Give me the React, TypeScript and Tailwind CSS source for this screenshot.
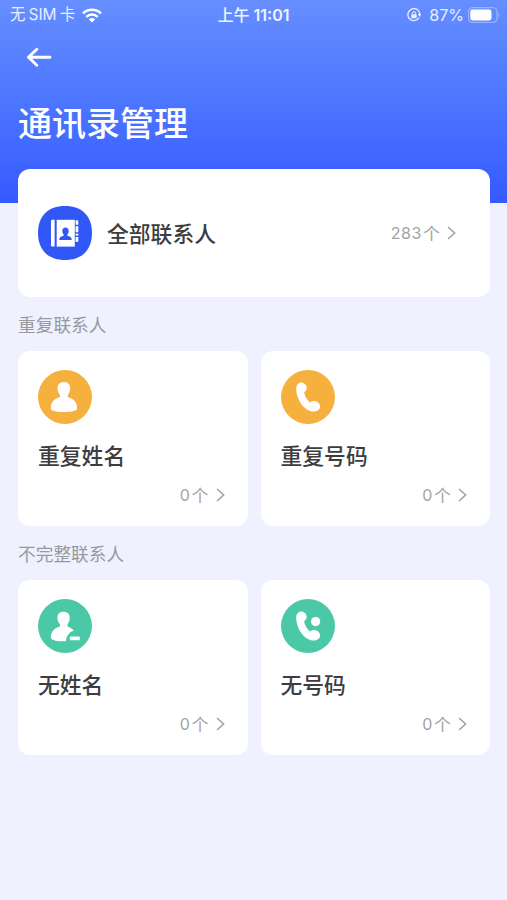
import React from 'react';

interface Tile {
  title: string;
  count: number;
  icon: React.ReactNode;
}

interface SectionProps {
  label: string;
  tiles: Tile[];
}

const PHONE_PATH =
  'M18.2 13.1C20.8 11.8 24.2 13.2 25.3 16C26.3 18.6 25.5 20.7 23.2 22C23.4 25.7 25.9 30 29.2 32.4C31.3 30.8 34.4 30.6 36.7 32.2C39.4 34.1 39.9 37.7 37.7 39.8C34.6 42.6 29.3 42.1 24.9 38.8C19.2 34.5 15.5 26.6 15.2 19.8C15 16.5 16 14.3 18.2 13.1Z';

function ContactBookIcon() {
  return (
    <svg viewBox="0 0 54 54" className="size-[54px] shrink-0">
      <path
        d="M27 0C44 0 54 10 54 27S44 54 27 54S0 44 0 27S10 0 27 0Z"
        fill="#3157f7"
      />
      <g fill="#fff">
        <path d="M14.5 13.8H16.6V40.6H14.5C13.5 40.6 13 40.1 13 39.2V15.2C13 14.3 13.5 13.8 14.5 13.8Z" />
        <path d="M18.7 13.8H36.8V40.6H18.7Z" />
        <path d="M37.6 14.2H39Q40.3 14.2 40.3 15.5V18.8H37.6Z" />
        <path d="M37.6 20.2H40.3V26.2H37.6Z" />
        <path d="M37.6 27.6H40.3V29.6H37.6Z" />
        <path d="M37.6 31H40.3V34.6Q40.3 35.9 39 35.9H37.6Z" />
      </g>
      <path
        d="M27.5 21.4C29.5 21.4 30.7 22.7 30.7 24.7C30.7 26.5 30.1 27.7 29.3 28.6V29.8C31.9 30.3 33.8 31.2 33.8 33.9H21.2C21.2 31.2 23.1 30.3 25.7 29.8V28.6C24.9 27.7 24.3 26.5 24.3 24.7C24.3 22.7 25.5 21.4 27.5 21.4Z"
        fill="#3157f7"
      />
    </svg>
  );
}

function PersonIcon() {
  return (
    <svg viewBox="0 0 54 54" className="size-[54px]">
      <circle cx="27" cy="27" r="27" fill="#f6b03d" />
      <path
        d="M25.8 12C29.8 12 32.2 14.5 32.2 18.2C32.2 21.3 31 23.3 29.8 24.9V27C35.2 28.5 39.1 32.1 39.1 38.2C39.1 40.8 34.5 42 25.9 42C17.4 42 12.8 40.8 12.8 38.2C12.8 32.1 16.8 28.5 22 27V24.9C20.7 23.3 19.5 21.3 19.5 18.2C19.5 14.5 21.9 12 25.8 12Z"
        fill="#fff"
      />
    </svg>
  );
}

function PhoneIcon() {
  return (
    <svg viewBox="0 0 54 54" className="size-[54px]">
      <circle cx="27" cy="27" r="27" fill="#f6b03d" />
      <path d={PHONE_PATH} fill="#fff" />
    </svg>
  );
}

function PersonMissingIcon() {
  return (
    <svg viewBox="0 0 54 54" className="size-[54px]">
      <circle cx="27" cy="27" r="27" fill="#4bc8a5" />
      <path
        d="M25.5 12.8C29.4 12.8 31.7 15.1 31.7 18.7C31.7 21.7 30.6 23.7 29.5 25.2V27.4C32 28.3 34.2 29.7 35.8 31.6C31.2 33.2 28.2 37 28 42.3H24.3C17.4 42.2 12.8 41 12.8 38.3C12.8 32.5 16.5 29 21.9 27.4V25.2C20.6 23.7 19.4 21.7 19.4 18.7C19.4 15.1 21.6 12.8 25.5 12.8Z"
        fill="#fff"
      />
      <rect x="31.8" y="37.6" width="10" height="3.6" rx="0.8" fill="#fff" />
    </svg>
  );
}

function PhoneMissingIcon() {
  return (
    <svg viewBox="0 0 54 54" className="size-[54px]">
      <circle cx="27" cy="27" r="27" fill="#4bc8a5" />
      <path d={PHONE_PATH} fill="#fff" />
      <circle cx="34.6" cy="22.6" r="4.6" fill="#fff" />
    </svg>
  );
}

function Count({ value }: { value: number }) {
  return (
    <div className="flex items-center text-[#a3a3a6]">
      <span className="font-['Inter','Noto_Sans_CJK_SC',sans-serif] text-base leading-6 tracking-[0.6px]">
        {value}
      </span>
      <span className="ml-px text-[17px] leading-6">个</span>
      <svg viewBox="0 0 9 14" className="ml-[7px] h-3.5 w-[9px]" fill="none">
        <path d="M1 1L7.6 7L1 13" stroke="currentColor" strokeWidth="1.6" />
      </svg>
    </div>
  );
}

function Section({ label, tiles }: SectionProps) {
  return (
    <section>
      <h2 className="flex h-[54px] items-center text-[17.7px] text-[#98999f]">
        {label}
      </h2>
      <div className="grid grid-cols-2 gap-[13px]">
        {tiles.map((tile) => (
          <div
            key={tile.title}
            className="flex h-[175px] flex-col rounded-xl bg-white px-5 pt-[19px]"
          >
            {tile.icon}
            <div className="mt-[15px] text-[21.8px] leading-8 font-medium text-[#3d3d3f]">
              {tile.title}
            </div>
            <div className="mt-3 flex justify-end pr-[3px]">
              <Count value={tile.count} />
            </div>
          </div>
        ))}
      </div>
    </section>
  );
}

function StatusBar() {
  return (
    <div className="grid h-[30px] grid-cols-3 items-center font-['Inter','Noto_Sans_CJK_SC',sans-serif] text-base text-white/85">
      <div className="flex items-center pl-2.5">
        <div className="flex gap-[3px] text-[15.5px] whitespace-nowrap">
          <span>无</span>
          <span>SIM</span>
          <span>卡</span>
        </div>
        <svg viewBox="0 0 20 15" className="ml-[7px] h-[15px] w-5" fill="none">
          <g stroke="#fff" strokeWidth="2.5">
            <path d="M1 5.3C6 0.5 14 0.5 19 5.3" />
            <path d="M4.3 8.8C7.6 5.8 12.4 5.8 15.7 8.8" />
          </g>
          <path d="M6.8 11.2C8.7 9.6 11.3 9.6 13.2 11.2L10 14.6Z" fill="#fff" />
        </svg>
      </div>
      <div className="text-center font-semibold whitespace-nowrap text-white/90">
        <span className="font-medium">上午</span> 11:01
      </div>
      <div className="flex items-center justify-end pr-[7px]">
        <svg viewBox="0 0 14 14" className="mr-2 size-3.5" fill="none">
          <path
            d="M12 9.8A6 6 0 1 1 12.9 6.2"
            stroke="currentColor"
            strokeWidth="1.4"
          />
          <path d="M10.8 6H14L12.9 9.2Z" fill="currentColor" />
          <rect x="4.3" y="6.3" width="5.4" height="4" rx="0.6" fill="currentColor" />
          <path d="M5.4 6.5V5.2A1.6 1.6 0 0 1 8.6 5.2V6.5" stroke="currentColor" />
        </svg>
        <span>87%</span>
        <svg viewBox="0 0 32 16" className="ml-1 h-4 w-8" fill="none">
          <rect
            x="0.6"
            y="0.6"
            width="28.3"
            height="14.8"
            rx="4"
            stroke="#fff"
            strokeOpacity="0.35"
            strokeWidth="1.2"
          />
          <rect x="2.3" y="2.5" width="21.2" height="11" rx="2.4" fill="#fff" />
          <path d="M30.3 5.5C31.8 6.3 31.8 9.7 30.3 10.5Z" fill="#fff" fillOpacity="0.35" />
        </svg>
      </div>
    </div>
  );
}

const duplicateTiles: Tile[] = [
  { title: '重复姓名', count: 0, icon: <PersonIcon /> },
  { title: '重复号码', count: 0, icon: <PhoneIcon /> },
];

const incompleteTiles: Tile[] = [
  { title: '无姓名', count: 0, icon: <PersonMissingIcon /> },
  { title: '无号码', count: 0, icon: <PhoneMissingIcon /> },
];

export default function App() {
  return (
    <div className="min-h-[900px] w-[507px] bg-[#eff1ff] font-['Noto_Sans_CJK_SC',sans-serif]">
      <header className="h-[203px] bg-linear-to-b from-[#668eff] to-[#3659ff]">
        <StatusBar />
        <button type="button" className="mt-[17px] ml-[26px] block">
          <svg viewBox="0 0 26 20" className="h-5 w-[26px]" fill="none">
            <path
              d="M24 10.2H2.5M10.8 2.2L2.5 10.2L10.8 18.2"
              stroke="#fff"
              strokeWidth="2.9"
              strokeLinecap="round"
              strokeLinejoin="round"
            />
          </svg>
        </button>
        <h1 className="mt-[31px] ml-[18px] text-[34px] leading-[48px] font-medium text-white">
          通讯录管理
        </h1>
      </header>
      <main className="-mt-[34px] pr-[17px] pl-[18px]">
        <div className="flex h-32 items-center rounded-xl bg-white pr-[34px] pl-5">
          <ContactBookIcon />
          <span className="ml-[15px] flex-1 text-[21.8px] font-medium text-[#3d3d3f]">
            全部联系人
          </span>
          <Count value={283} />
        </div>
        <Section label="重复联系人" tiles={duplicateTiles} />
        <Section label="不完整联系人" tiles={incompleteTiles} />
      </main>
    </div>
  );
}
